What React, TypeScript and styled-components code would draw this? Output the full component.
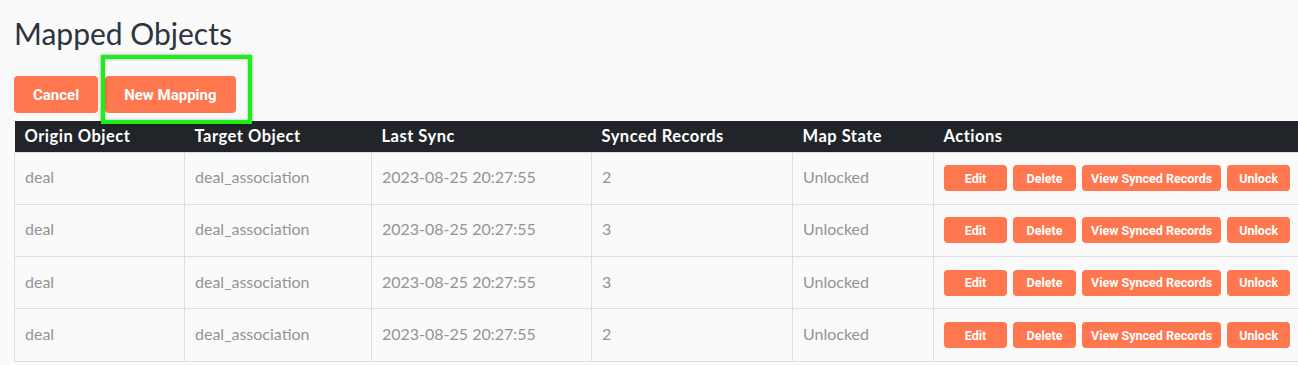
import React from "react";
import styled, { createGlobalStyle } from "styled-components";

const GlobalStyle = createGlobalStyle`
  html, body { margin: 0; padding: 0; background: #fafafa; overflow: hidden; }
  body { font-family: "Lato", "Open Sans", sans-serif; }
`;

const Page = styled.div`
  padding: 15px 0 0 14px;
  width: 1400px;
`;

const Title = styled.h1`
  margin: 0 0 25px 0;
  font-family: "Lato", sans-serif;
  font-weight: 400;
  font-size: 30px;
  line-height: 36px;
  color: #2d3440;
  letter-spacing: 0;
`;

const Toolbar = styled.div`
  display: flex;
  gap: 7px;
  margin-bottom: 8px;
`;

const Button = styled.button<{ $small?: boolean }>`
  display: inline-flex;
  align-items: center;
  justify-content: center;
  border: none;
  background: #ff774f;
  color: #fff;
  font-family: "Roboto", sans-serif;
  font-weight: 700;
  font-size: ${(p) => (p.$small ? "12.5px" : "15px")};
  height: ${(p) => (p.$small ? "26px" : "37px")};
  min-width: ${(p) => (p.$small ? "63px" : "auto")};
  padding: ${(p) => (p.$small ? "0 9px" : "0 19px")};
  border-radius: 4px;
  cursor: pointer;
`;

const Highlight = styled.div`
  position: relative;
  display: inline-flex;
`;

const HighlightFrame = styled.div`
  position: absolute;
  left: -4px;
  top: -21px;
  width: 151px;
  height: 69px;
  box-sizing: border-box;
  border: 4px solid #18f018;
  box-shadow: 0 0 3px rgba(0, 0, 0, 0.4), inset 0 0 3px rgba(0, 0, 0, 0.3);
  pointer-events: none;
  z-index: 2;
`;

const Table = styled.table`
  border-collapse: collapse;
  table-layout: fixed;
  width: 1380px;
`;

const HeadCell = styled.th<{ $w: number }>`
  width: ${(p) => p.$w}px;
  background: #212529;
  color: #fff;
  font-family: "Lato", sans-serif;
  font-weight: 700;
  font-size: 16.5px;
  text-align: left;
  height: 31px;
  padding: 0 10px;
  box-sizing: border-box;
  letter-spacing: 0.5px;
`;

const Row = styled.tr`
  height: 52.3px;
`;

const Cell = styled.td`
  border: 1px solid #dedede;
  padding: 0 10px 3px 10px;
  font-family: "Lato", sans-serif;
  font-weight: 400;
  font-size: 16px;
  color: #949494;
  vertical-align: middle;
  letter-spacing: 0;
`;

const Actions = styled.div`
  display: flex;
  gap: 6px;
  padding-top: 3px;
`;

const columns = [
  { label: "Origin Object", w: 170 },
  { label: "Target Object", w: 187 },
  { label: "Last Sync", w: 220 },
  { label: "Synced Records", w: 201 },
  { label: "Map State", w: 141 },
  { label: "Actions", w: 461 },
];

const rows = [
  { origin: "deal", target: "deal_association", sync: "2023-08-25 20:27:55", count: 2, state: "Unlocked" },
  { origin: "deal", target: "deal_association", sync: "2023-08-25 20:27:55", count: 3, state: "Unlocked" },
  { origin: "deal", target: "deal_association", sync: "2023-08-25 20:27:55", count: 3, state: "Unlocked" },
  { origin: "deal", target: "deal_association", sync: "2023-08-25 20:27:55", count: 2, state: "Unlocked" },
];

export default function App() {
  return (
    <>
      <GlobalStyle />
      <Page>
        <Title>Mapped Objects</Title>
        <Toolbar>
          <Button>Cancel</Button>
          <Highlight>
            <Button>New Mapping</Button>
            <HighlightFrame />
          </Highlight>
        </Toolbar>
        <Table>
          <thead>
            <tr>
              {columns.map((c) => (
                <HeadCell key={c.label} $w={c.w}>
                  {c.label}
                </HeadCell>
              ))}
            </tr>
          </thead>
          <tbody>
            {rows.map((r, i) => (
              <Row key={i}>
                <Cell>{r.origin}</Cell>
                <Cell>{r.target}</Cell>
                <Cell>{r.sync}</Cell>
                <Cell>{r.count}</Cell>
                <Cell>{r.state}</Cell>
                <Cell>
                  <Actions>
                    <Button $small>Edit</Button>
                    <Button $small>Delete</Button>
                    <Button $small>View Synced Records</Button>
                    <Button $small>Unlock</Button>
                  </Actions>
                </Cell>
              </Row>
            ))}
          </tbody>
        </Table>
      </Page>
    </>
  );
}
